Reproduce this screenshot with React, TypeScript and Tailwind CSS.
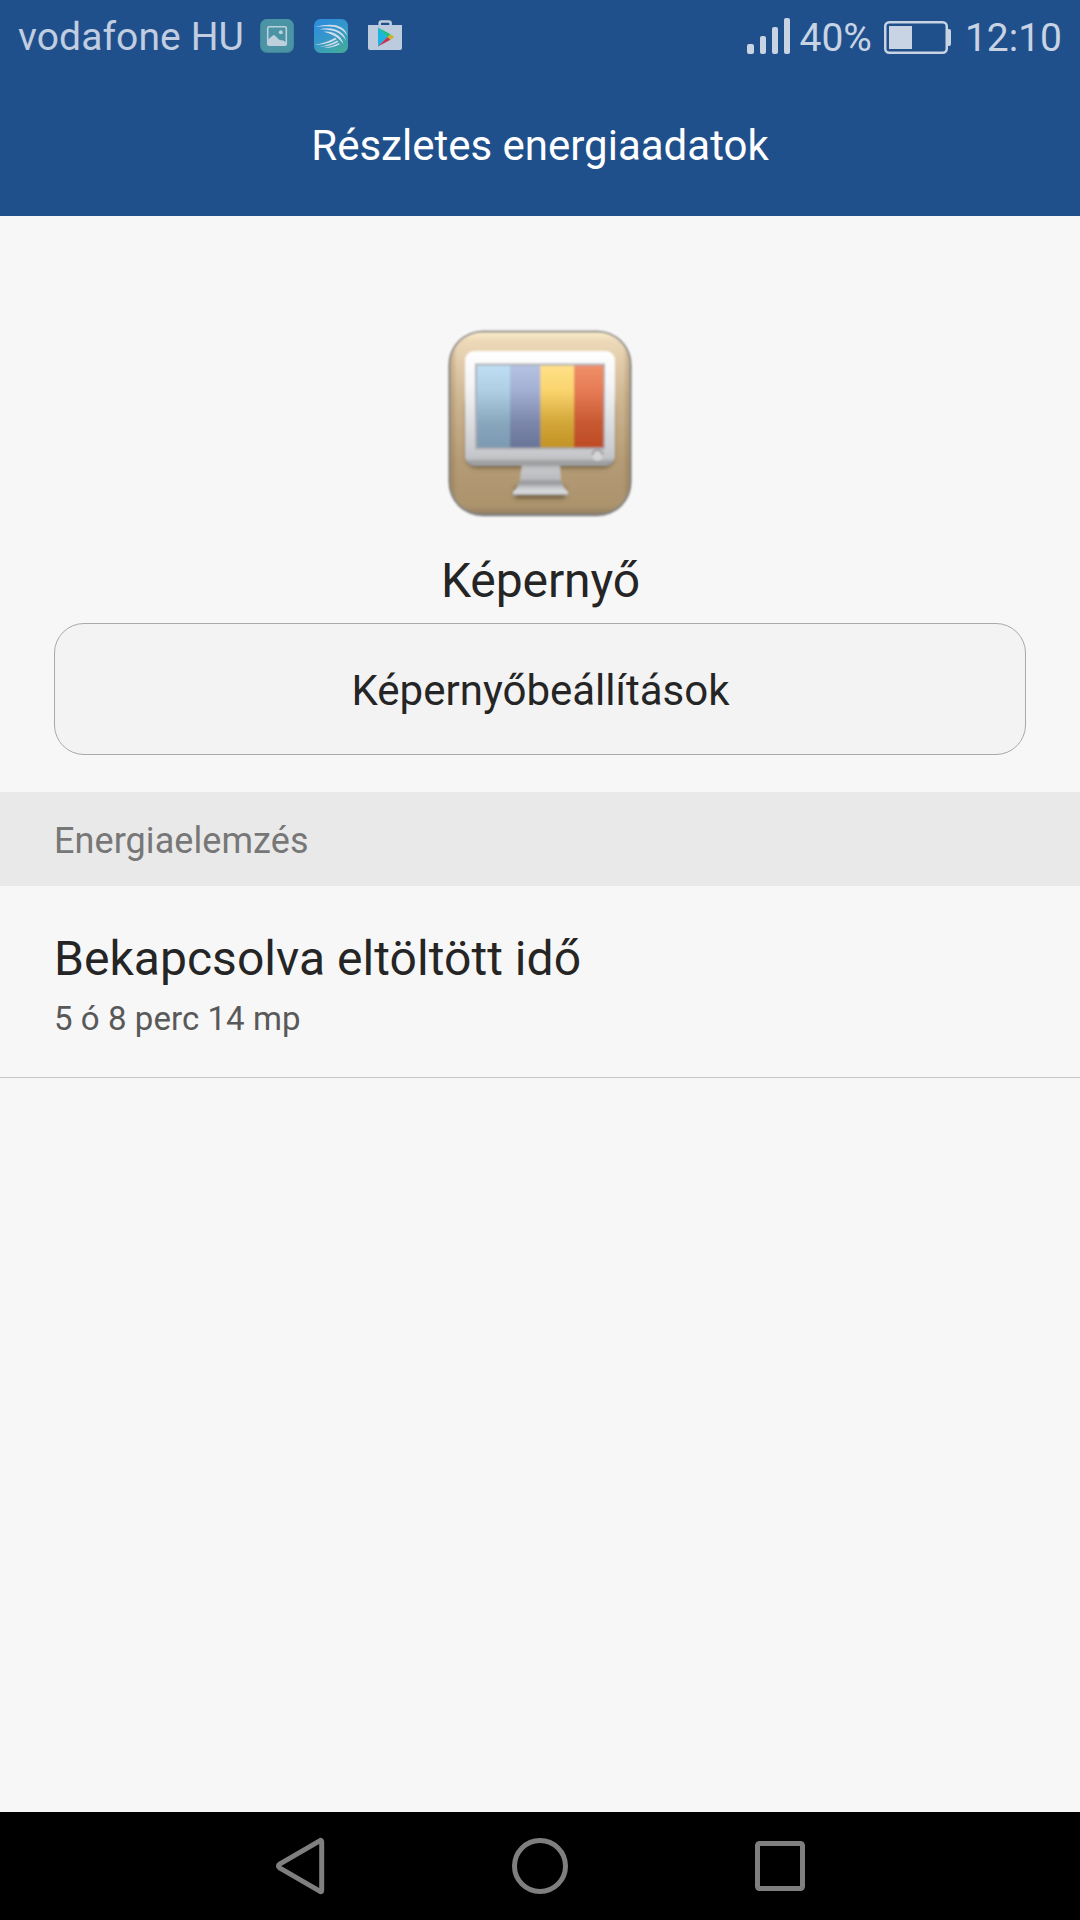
function GalleryIcon() {
    return (
        <svg width="34" height="34" viewBox="0 0 34 34">
            <rect width="34" height="34" rx="7" fill="#3f8192" />
            <rect x="0.5" y="0" width="33" height="33" rx="6.5" fill="#4a94a5" />
            <rect
                x="7.7"
                y="7.7"
                width="18.6"
                height="18.6"
                rx="1.5"
                fill="none"
                stroke="#bdd0dc"
                strokeWidth="1.6"
            />
            <circle cx="20.8" cy="13.3" r="2" fill="#bdd0dc" />
            <path
                d="M8 20.5 L13.2 16.2 Q14 15.7 14.8 16.4 L19 20.5 Q20 21.4 21.5 21.2 Q23.5 21 26 23.6 V26 H8 Z"
                fill="#bdd0dc"
            />
        </svg>
    );
}

function SwiftKeyIcon() {
    return (
        <svg width="34" height="34" viewBox="0 0 34 34">
            <defs>
                <linearGradient id="swift" x1="0.2" y1="0" x2="0.8" y2="1">
                    <stop offset="0" stopColor="#2f8ddd" />
                    <stop offset="0.5" stopColor="#3598c8" />
                    <stop offset="1" stopColor="#43ab9b" />
                </linearGradient>
            </defs>
            <rect width="34" height="34" rx="6.5" fill="url(#swift)" />
            <g fill="#cfdcec">
                <path d="M1 8 Q13 4.6 22 6.2 Q32.5 9 33.2 17 Q29.5 10.2 21 8 Q12 6.6 1 8 Z" />
                <path d="M5 10.2 Q14 8 21.5 10.4 Q31 13.8 32 22 Q28.5 15 20 12 Q13 10 5 10.2 Z" />
                <path d="M9.5 12.8 Q16 11.8 21 14.6 Q28 18.4 29.3 25 Q25 19 19 16.2 Q15 14 9.5 12.8 Z" />
                <path d="M1 25.6 Q11 24.6 21.3 18.8 L22.5 20.3 Q12 26.4 1 25.6 Z" />
                <path d="M5.5 27.5 Q15 26.2 23.2 21.5 L24.2 22.9 Q15 28 5.5 27.5 Z" />
                <path d="M10 29 Q18 27.8 25 24 L25.8 25.3 Q18 29.4 10 29 Z" />
            </g>
        </svg>
    );
}

function PlayStoreIcon() {
    return (
        <svg width="34" height="32" viewBox="0 0 34 32">
            <path
                d="M11.7 7 V4.2 Q11.7 2.5 13.4 2.5 H20.9 Q22.6 2.5 22.6 4.2 V7"
                fill="none"
                stroke="#bccbdd"
                strokeWidth="2.6"
            />
            <path
                d="M0 6 H34 V29 Q34 31 32 31 H2 Q0 31 0 29 Z"
                fill="#bccbdd"
            />
            <path d="M10 8.5 L19.5 18 L10 27.5 Z" fill="#1cb3dd" />
            <path d="M10 8.5 L22.5 15.2 L19.5 18 Z" fill="#16c182" />
            <path d="M10 27.5 L22.5 20.8 L19.5 18 Z" fill="#cb2f52" />
            <path d="M22.5 15.2 L26.3 18 L22.5 20.8 L19.5 18 Z" fill="#cdb02c" />
        </svg>
    );
}

function SignalIcon() {
    return (
        <svg width="43" height="36" viewBox="0 0 43 36" fill="#c8d3e4">
            <rect x="0" y="26" width="7" height="10" rx="2" />
            <rect x="13" y="18" width="6" height="18" rx="2" />
            <rect x="25" y="9" width="6" height="27" rx="2" />
            <rect x="37" y="0" width="6" height="36" rx="2" />
        </svg>
    );
}

function BatteryIcon() {
    return (
        <svg width="67" height="33" viewBox="0 0 67 33">
            <rect
                x="1.25"
                y="1.25"
                width="61.5"
                height="30.5"
                rx="4"
                fill="none"
                stroke="#c8d3e4"
                strokeWidth="2.5"
            />
            <rect x="5" y="5" width="23" height="23" fill="#c8d3e4" />
            <path d="M63 8 H65 Q67 8 67 10 V23 Q67 25 65 25 H63 Z" fill="#c8d3e4" />
        </svg>
    );
}

function DisplayIcon() {
    return (
        <svg width="192" height="192" viewBox="0 0 192 192">
            <defs>
                <linearGradient id="tile" x1="0" y1="0" x2="0" y2="1">
                    <stop offset="0" stopColor="#fbecc9" />
                    <stop offset="0.05" stopColor="#ecd8b8" />
                    <stop offset="0.1" stopColor="#e8d3b2" />
                    <stop offset="0.35" stopColor="#cfb894" />
                    <stop offset="0.7" stopColor="#b59c76" />
                    <stop offset="0.96" stopColor="#ab936d" />
                    <stop offset="1" stopColor="#927e5e" />
                </linearGradient>
                <linearGradient id="sides" x1="0" y1="0" x2="1" y2="0">
                    <stop offset="0" stopColor="#6b5636" stopOpacity="0.3" />
                    <stop offset="0.04" stopColor="#6b5636" stopOpacity="0" />
                    <stop offset="0.96" stopColor="#6b5636" stopOpacity="0" />
                    <stop offset="1" stopColor="#6b5636" stopOpacity="0.3" />
                </linearGradient>
                <linearGradient id="frame" x1="0" y1="0" x2="0" y2="1">
                    <stop offset="0" stopColor="#ffffff" />
                    <stop offset="0.3" stopColor="#f4f4f6" />
                    <stop offset="0.85" stopColor="#cccdd1" />
                    <stop offset="0.93" stopColor="#c3c4c6" />
                    <stop offset="0.97" stopColor="#9b9c9e" />
                    <stop offset="1" stopColor="#a5a6a8" />
                </linearGradient>
                <linearGradient id="blue" x1="0" y1="0" x2="0" y2="1">
                    <stop offset="0" stopColor="#bfdef3" />
                    <stop offset="0.3" stopColor="#afcfe4" />
                    <stop offset="0.7" stopColor="#88a7bd" />
                    <stop offset="1" stopColor="#7b99b0" />
                </linearGradient>
                <linearGradient id="violet" x1="0" y1="0" x2="0" y2="1">
                    <stop offset="0" stopColor="#b5c2e3" />
                    <stop offset="0.3" stopColor="#a4b0d3" />
                    <stop offset="0.7" stopColor="#7b86aa" />
                    <stop offset="1" stopColor="#697598" />
                </linearGradient>
                <linearGradient id="yellow" x1="0" y1="0" x2="0" y2="1">
                    <stop offset="0" stopColor="#ffe287" />
                    <stop offset="0.3" stopColor="#fad46e" />
                    <stop offset="0.7" stopColor="#d2a638" />
                    <stop offset="1" stopColor="#c39325" />
                </linearGradient>
                <linearGradient id="red" x1="0" y1="0" x2="0" y2="1">
                    <stop offset="0" stopColor="#f08f69" />
                    <stop offset="0.3" stopColor="#e67c57" />
                    <stop offset="0.7" stopColor="#c75931" />
                    <stop offset="1" stopColor="#bd4b26" />
                </linearGradient>
                <linearGradient id="stand" x1="0" y1="0" x2="0" y2="1">
                    <stop offset="0" stopColor="#aeafb1" />
                    <stop offset="0.2" stopColor="#c4c5c8" />
                    <stop offset="0.45" stopColor="#bcbdc0" />
                    <stop offset="0.6" stopColor="#96979b" />
                    <stop offset="0.75" stopColor="#c6c7ca" />
                    <stop offset="0.9" stopColor="#dcdde0" />
                    <stop offset="1" stopColor="#a4a4a4" />
                </linearGradient>
                <filter id="soft" x="-10%" y="-10%" width="120%" height="130%">
                    <feGaussianBlur stdDeviation="2.6" />
                </filter>
                <filter id="edge" x="-5%" y="-5%" width="110%" height="110%">
                    <feGaussianBlur stdDeviation="0.9" />
                </filter>
            </defs>
            <rect x="4.5" y="4.8" width="183" height="185.4" rx="34" fill="#777777" opacity="0.9" filter="url(#edge)" />
            <g filter="url(#edge)">
                <rect x="6" y="6.3" width="180" height="181.5" rx="32" fill="url(#tile)" />
                <rect x="6" y="6.3" width="180" height="181.5" rx="32" fill="url(#sides)" />
            </g>
            <g fill="#4d3d22" opacity="0.75" filter="url(#soft)">
                <rect x="23" y="70" width="146" height="71.5" rx="9" />
                <rect x="71" y="161" width="50" height="11" />
            </g>
            <g filter="url(#edge)">
                <path
                    d="M78 138 H116 L117 153 Q118 160 124 165.5 Q125 168.5 123 169.5 H70 Q68 168.5 69 165.5 Q75 160 76 153 Z"
                    fill="url(#stand)"
                />
                <rect x="21" y="25" width="150" height="115" rx="9" fill="url(#frame)" />
                <rect x="31" y="37.5" width="130" height="86" fill="#adadb3" />
                <g>
                    <rect x="33" y="39.5" width="34" height="82" fill="url(#blue)" />
                    <rect x="66" y="39.5" width="31" height="82" fill="url(#violet)" />
                    <rect x="96.3" y="39.5" width="34.5" height="82" fill="url(#yellow)" />
                    <rect x="130" y="39.5" width="29.5" height="82" fill="url(#red)" />
                </g>
                <circle cx="153.5" cy="130" r="5" fill="#d5d5d8" />
                <path
                    d="M148.5 129 A5 5 0 0 1 158.5 129"
                    fill="none"
                    stroke="#9c9c9f"
                    strokeWidth="2.2"
                />
            </g>
        </svg>
    );
}

function StatusBar() {
    return (
        <div className="flex h-18 justify-between px-[18px] text-[39px] leading-[74px] text-[#c1cde0]">
            <div className="flex">
                <span className="w-[242px] tracking-[0.1px] whitespace-nowrap">
                    vodafone HU
                </span>
                <div className="flex gap-5 pt-[19px]">
                    <GalleryIcon />
                    <SwiftKeyIcon />
                    <PlayStoreIcon />
                </div>
            </div>
            <div className="flex text-[#c8d3e4]">
                <div className="pt-[18px]">
                    <SignalIcon />
                </div>
                <span className="ml-[9px] leading-[76px]">40%</span>
                <div className="mr-[14px] ml-[12px] pt-[21px]">
                    <BatteryIcon />
                </div>
                <span className="leading-[76px]">12:10</span>
            </div>
        </div>
    );
}

function NavigationBar() {
    return (
        <nav className="flex h-27 items-center justify-center gap-[180px] bg-black">
            <svg width="60" height="60" viewBox="0 0 60 60" fill="none" stroke="#7f7f7f" strokeWidth="5">
                <path
                    d="M51.7 5.8 V54.2 Q51.7 56.5 49.7 55.2 L10 32.2 Q6.8 30 10 27.8 L49.7 4.8 Q51.7 3.5 51.7 5.8 Z"
                    strokeLinejoin="round"
                />
            </svg>
            <svg width="60" height="60" viewBox="0 0 60 60" fill="none" stroke="#7f7f7f" strokeWidth="5">
                <circle cx="30" cy="30" r="25.5" />
            </svg>
            <svg width="60" height="60" viewBox="0 0 60 60" fill="none" stroke="#7f7f7f" strokeWidth="5">
                <rect x="7.5" y="7.5" width="45" height="45" rx="2" />
            </svg>
        </nav>
    );
}

export default function App() {
    return (
        <div className="flex h-[1920px] w-[1080px] flex-col bg-[#f7f7f7] font-['Roboto',sans-serif] text-[#252525]">
            <header className="h-54 bg-[#20508c]">
                <StatusBar />
                <h1 className="text-center text-[42px] leading-[147px] text-white">
                    Részletes energiaadatok
                </h1>
            </header>

            <main className="flex flex-1 flex-col">
                <section className="flex flex-col items-center px-[54px] pt-[110px]">
                    <DisplayIcon />
                    <h2 className="mt-[25px] h-[80px] pl-px text-[48px] leading-[76px] tracking-[-0.1px]">
                        Képernyő
                    </h2>
                    <button className="h-[132px] w-full rounded-[30px] border border-[#a9a9a9] bg-[#f3f3f3] pt-[2px] pl-px text-[42px]">
                        Képernyőbeállítások
                    </button>
                </section>

                <h3 className="mt-[37px] h-[94px] bg-[#e9e9e9] px-[54px] text-[36px] leading-[98px] tracking-[0.07px] text-[#777777]">
                    Energiaelemzés
                </h3>

                <div className="h-[192px] border-b border-[#c6c6c6] px-[54px] pt-[38px]">
                    <p className="text-[48px] leading-[70px] tracking-[0.04px]">
                        Bekapcsolva eltöltött idő
                    </p>
                    <p className="text-[33px] leading-[50px] tracking-[0.06px] text-[#595959]">
                        5 ó 8 perc 14 mp
                    </p>
                </div>
            </main>

            <NavigationBar />
        </div>
    );
}
